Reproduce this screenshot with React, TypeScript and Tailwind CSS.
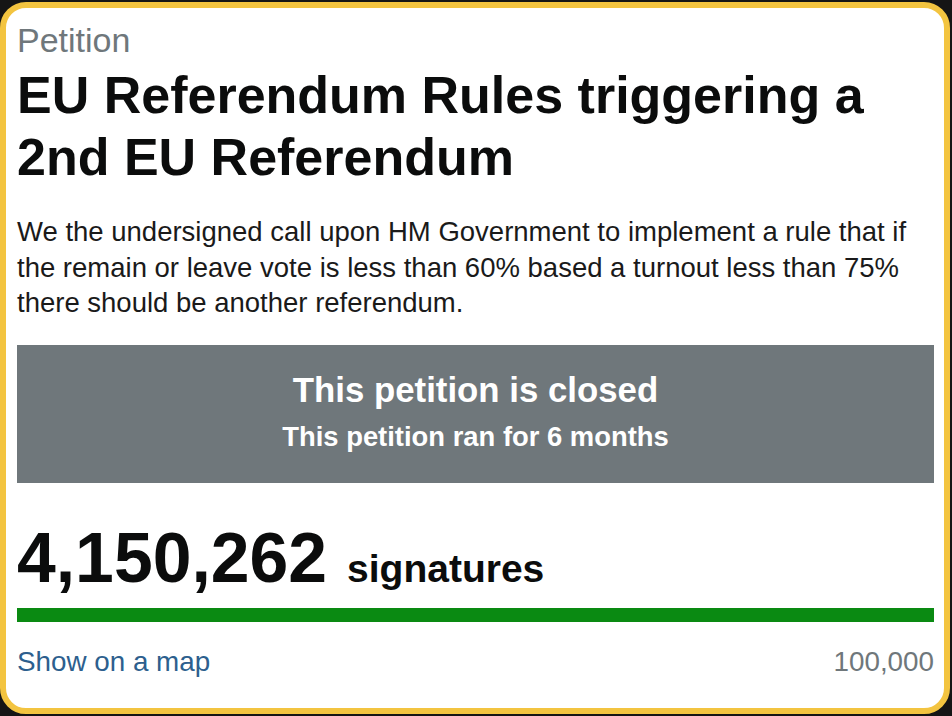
const petition = {
  title: "EU Referendum Rules triggering a 2nd EU Referendum",
  body: "We the undersigned call upon HM Government to implement a rule that if the remain or leave vote is less than 60% based a turnout less than 75% there should be another referendum.",
  signatures: "4,150,262",
  threshold: "100,000",
};

export default function App() {
  return (
    <div
      className="h-screen w-full bg-[#151515] pt-[2px] pr-[2px] pb-[2px]"
      style={{ fontFamily: '"Liberation Sans", Arial, sans-serif' }}
    >
      <div className="h-full rounded-[26px] border-[6px] border-[#f3c440] bg-white pl-[11px] pr-[10px] pt-[12px]">
        <p className="text-[34px] leading-[40px] text-[#6f777b]">Petition</p>

        <h1 className="mt-[4px] text-[52px] font-bold leading-[62px] text-[#0b0c0c]">
          EU Referendum Rules triggering a
          <br />
          2nd EU Referendum
        </h1>

        <p className="mt-[26px] text-[27.5px] leading-[35.5px] text-[#1a1a1a]">
          {petition.body}
        </p>

        {/* closed banner */}
        <div className="mt-[24px] flex h-[138px] flex-col items-center bg-[#6f777b] pt-[25px] text-white">
          <p className="text-[34.8px] font-bold leading-[40px]">This petition is closed</p>
          <p className="mt-[10px] text-[27.4px] font-bold leading-[34px]">
            This petition ran for 6 months
          </p>
        </div>

        <div className="mt-[35px] flex items-baseline text-[#0b0c0c]">
          <span className="text-[69.7px] font-bold leading-[80px]">{petition.signatures}</span>
          <span className="ml-[20px] text-[39px] font-bold leading-[40px]">signatures</span>
        </div>

        <div className="mt-[10px] h-[14px] w-full bg-[#0a8a12]" />

        <div className="mt-[23px] flex items-baseline justify-between text-[27.8px] leading-[34px]">
          <a className="text-[#2d5f8e]">Show on a map</a>
          <span className="text-[#6f777b]">{petition.threshold}</span>
        </div>
      </div>
    </div>
  );
}
